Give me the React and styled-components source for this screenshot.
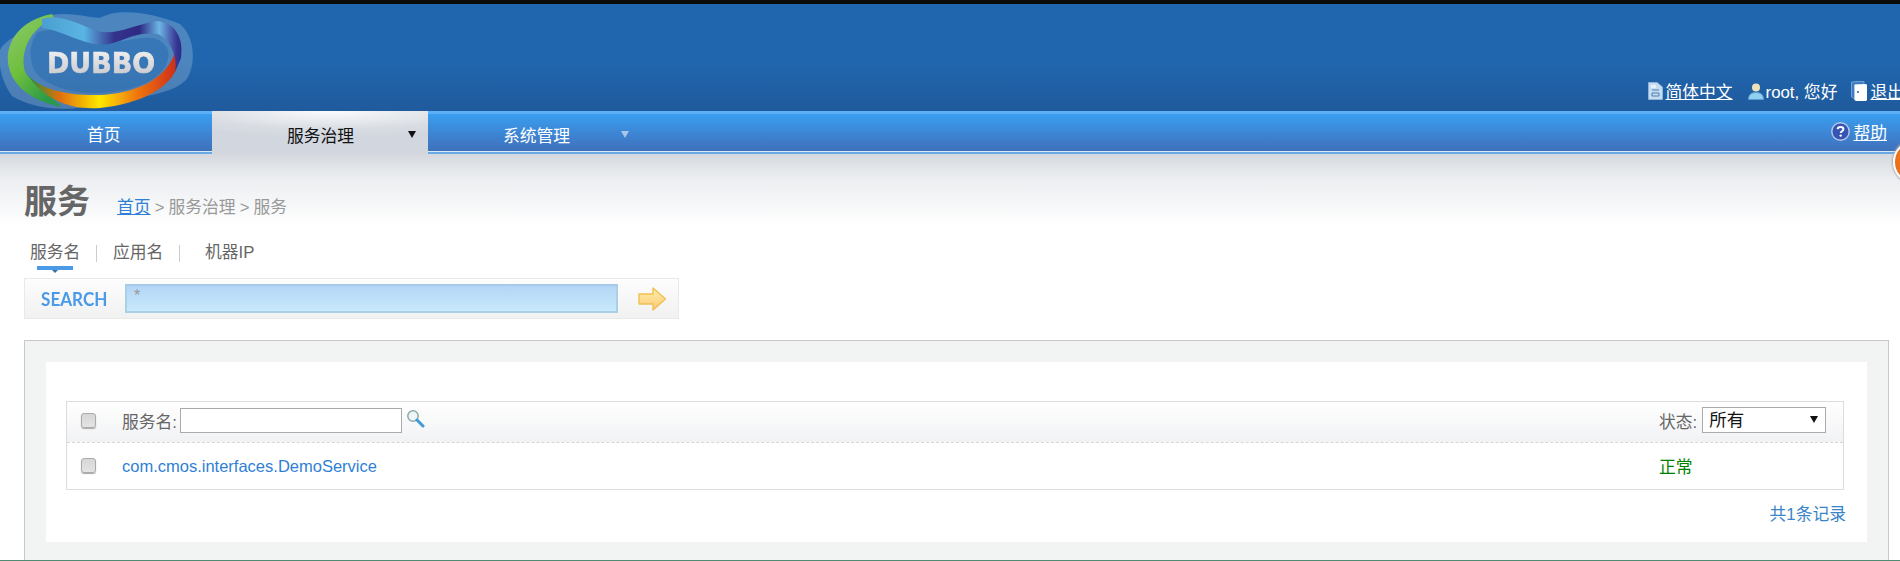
import React from "react";
import styled, { createGlobalStyle } from "styled-components";

const FONT = `"Liberation Sans", "Noto Sans CJK SC", sans-serif`;

const Global = createGlobalStyle`
  html, body { margin: 0; padding: 0; background: #fff; }
  body { font-family: ${FONT}; font-size: 16.8px; overflow: hidden; }
  * { box-sizing: border-box; }
`;

const Page = styled.div`
  position: relative;
  width: 1900px;
  height: 561px;
  overflow: hidden;
  display: flex;
  flex-direction: column;
`;
const TopEdge = styled.div`height: 4px; background: #0b0b0b;`;
const Header = styled.header`
  height: 107px;
  display: flex;
  justify-content: space-between;
  align-items: flex-end;
  background: linear-gradient(#2066ae 0%, #2066ae 55%, #1f5a9c 100%);
`;
const LogoBox = styled.svg`
  display: block;
  width: 196px;
  height: 107px;
  align-self: flex-start;
`;
const UserBar = styled.div`
  display: flex;
  align-items: center;
  height: 28px;
  margin-bottom: 6px;
  margin-right: -4px;
  color: #fff;
  white-space: nowrap;
`;
const UserItem = styled.span`
  display: flex;
  align-items: center;
  gap: 2px;
  margin-left: ${p => p.$gap}px;
  font-size: 16.8px;
`;
const HeadLink = styled.a`
  color: #fff;
  text-decoration: underline;
`;
const Nav = styled.nav`
  height: 43px;
  display: flex;
  background:
    linear-gradient(#5db0f8, #5db0f8) top / 100% 3px no-repeat,
    linear-gradient(#3a9ef0 3px, #3f70bb 40px);
  border-bottom: 2px solid #6aa9e6;
  box-shadow: inset 0 -1px 0 #dbe9f7;
`;
const Tab = styled.div`
  width: ${p => p.$w}px;
  height: ${p => (p.$active ? 43 : 41)}px;
  position: relative;
  color: ${p => (p.$active ? "#111" : "#fff")};
  background: ${p => (p.$active ? "radial-gradient(ellipse 90% 60% at 55% 0%, #fafbfc 0%, #d9dde3 70%, #d2d6de 100%)" : "transparent")};
  display: flex;
  align-items: center;
  padding-left: ${p => p.$pad}px;
  padding-top: ${p => p.$top}px;
  line-height: 1;
`;
const Caret = styled.i`
  position: absolute;
  left: ${p => p.$left}px;
  top: 20px;
  width: 0;
  height: 0;
  border: 4px solid transparent;
  border-bottom-width: 0;
  border-top: 7px solid ${p => p.$color};
`;
const NavSpacer = styled.div`flex: 1;`;
const HelpBox = styled.div`
  display: flex;
  align-items: center;
  gap: 3px;
  padding: 0 13px 0 0;
`;
const Content = styled.main`
  flex: 1;
  display: flex;
  flex-direction: column;
  background: linear-gradient(#d5d9df 0px, #eceef1 25px, #ffffff 72px);
`;
const TitleRow = styled.div`
  height: 66px;
  padding: 30px 0 0 24px;
  display: flex;
  align-items: flex-start;
`;
const Title = styled.h1`
  margin: 0;
  width: 93px;
  font-size: 33px;
  line-height: 36px;
  font-weight: 700;
  color: #666;
`;
const Crumbs = styled.div`
  margin-top: 12px;
  font-size: 16.8px;
  line-height: 24px;
  color: #999;
  word-spacing: -0.6px;
`;
const CrumbLink = styled.a`color: #2f7fd6; text-decoration: underline;`;
const SearchTabs = styled.div`
  display: flex;
  align-items: center;
  height: 58px;
  padding: 0 0 0 30px;
  color: #666;
  font-size: 16.8px;
  flex: none;
`;
const SearchTab = styled.span`
  position: relative;
  width: ${p => p.$w}px;
  line-height: 20px;
  margin-top: 8px;
`;
const TabMark = styled.i`
  position: absolute;
  left: 7px;
  top: 23px;
  width: 36px;
  height: 4px;
  background: #4a9ae8;
  &::after {
    content: "";
    position: absolute;
    left: 15px;
    top: 4px;
    border: 3px solid transparent;
    border-bottom-width: 0;
    border-top: 3px solid #3b6ea5;
  }
`;
const Sep = styled.i`
  width: 1px;
  height: 17px;
  margin-top: 8px;
  background: #ccc;
  margin-right: ${p => p.$mr}px;
`;
const SearchBar = styled.form`
  flex: none;
  margin: 0 0 21px 24px;
  width: 655px;
  height: 41px;
  display: flex;
  align-items: center;
  border: 1px solid #e9e9e9;
  background: linear-gradient(#fdfdfd, #f1f1f1);
  padding-left: 16px;
`;
const SearchLabel = styled.span`
  width: 84px;
  font-family: Lato, "Open Sans", sans-serif;
  font-weight: 700;
  font-size: 19px;
  color: #4a9ae8;
  transform: scaleX(0.9);
  transform-origin: left;
`;
const SearchInput = styled.input`
  width: 493px;
  height: 29px;
  margin-top: -1px;
  border: 2px solid #a9d0e6;
  border-top-color: #a5c9e8;
  padding: 0 0 4px 7px;
  outline: none;
  font-family: ${FONT};
  font-size: 16px;
  color: #999;
  background: linear-gradient(#b3d6f5, #c9e9fc);
`;
const GoArrow = styled.svg`
  width: 29px;
  height: 24px;
  margin-left: 20px;
`;
const Panel = styled.section`
  flex: 1;
  margin: 0 11px 0 24px;
  padding: 21px 21px 18px 21px;
  background: #f2f4f4;
  border: 1px solid #c8c8c8;
  border-bottom: 0;
`;
const Card = styled.div`
  height: 180px;
  background: #fff;
  padding: 39px 20px 0 20px;
  display: flex;
  flex-direction: column;
`;
const Table = styled.div`
  width: 1778px;
  height: 89px;
  border: 1px solid #dcdcdc;
  flex: none;
`;
const Row = styled.div`
  height: ${p => p.$h}px;
  display: grid;
  grid-template-columns: 41px 1537px 1fr;
  align-items: center;
  padding-left: 14px;
  padding-bottom: ${p => (p.$head ? 3 : 2)}px;
  background: ${p => (p.$head ? "linear-gradient(#ffffff, #f1f2f4)" : "#fff")};
  border-bottom: ${p => (p.$head ? "1px dashed #d6d6d6" : "0")};
  color: #666;
  font-size: 16.8px;
`;
const Check = styled.input.attrs({ type: "checkbox" })`
  appearance: none;
  display: block;
  margin: 0;
  width: 15px;
  height: 15px;
  border: 1px solid #aaa;
  border-radius: 3px;
  background: linear-gradient(#d6d6d6, #e4e4e4);
  box-shadow: 0 1px 1px #aaa;
`;
const NameCell = styled.div`
  display: flex;
  align-items: center;
  gap: 3px;
`;
const NameInput = styled.input`
  width: 222px;
  height: 25px;
  border: 1px solid #aaa;
  outline: none;
  background: #fff;
`;
const Magnifier = styled.svg`
  width: 19px;
  height: 19px;
  margin: -4px 0 0 1px;
`;
const StatusCell = styled.div`
  display: flex;
  align-items: center;
  gap: 5px;
  white-space: nowrap;
`;
const SelectWrap = styled.div`
  position: relative;
  width: 124px;
  height: 26px;
  margin-top: -1px;
`;
const Select = styled.select`
  appearance: none;
  width: 100%;
  height: 100%;
  border: 1px solid #aaa;
  border-radius: 0;
  background: #fff;
  color: #111;
  padding: 0 0 0 6px;
  font-family: ${FONT};
  font-size: 17.5px;
  outline: none;
`;
const SelectCaret = styled.i`
  position: absolute;
  right: 8px;
  top: 9px;
  border: 4px solid transparent;
  border-bottom-width: 0;
  border-top: 7px solid #111;
  pointer-events: none;
`;
const ServiceLink = styled.a`
  color: #2f7fd6;
  font-size: 16.5px;
  margin-top: 3px;
`;
const StatusOk = styled.span`
  color: #008000;
  margin-top: 2px;
`;
const Total = styled.div`
  align-self: flex-end;
  margin-top: 15px;
  margin-right: 1px;
  color: #3a85c8;
  font-size: 16.8px;
  line-height: 20px;
`;
const Foot = styled.div`
  position: absolute;
  left: 0;
  right: 0;
  bottom: 0;
  height: 1px;
  background: #4f8a72;
`;
const Bubble = styled.div`
  position: absolute;
  left: 1893px;
  top: 140px;
  width: 44px;
  height: 44px;
  border-radius: 50%;
  background: radial-gradient(circle at 40% 45%, #f47c20, #dd6414);
  border: 2px solid #fff;
  box-shadow: 0 0 2px 1px #aaa;
`;

const Logo = () => (
  <LogoBox viewBox="0 0 196 107">
    <defs>
      <linearGradient id="rb" x1="0" x2="1" y1="0" y2="0">
        <stop offset="0" stopColor="#1e8f3e" />
        <stop offset="0.22" stopColor="#e0700c" />
        <stop offset="0.48" stopColor="#ffe600" />
        <stop offset="0.72" stopColor="#ee7a10" />
        <stop offset="1" stopColor="#cf2a14" />
      </linearGradient>
      <linearGradient id="gr" x1="0" x2="0.6" y1="0" y2="1">
        <stop offset="0" stopColor="#8ccb72" />
        <stop offset="0.55" stopColor="#6fbe3c" />
        <stop offset="1" stopColor="#2a9a48" />
      </linearGradient>
      <linearGradient id="top" x1="0" x2="1" y1="0" y2="0">
        <stop offset="0" stopColor="#4b9fd0" />
        <stop offset="0.3" stopColor="#5ab4e4" />
        <stop offset="0.52" stopColor="#34328c" />
        <stop offset="0.7" stopColor="#2e2a84" />
        <stop offset="0.84" stopColor="#6cb6e6" />
        <stop offset="0.96" stopColor="#3a3a96" />
        <stop offset="1" stopColor="#2a2a86" />
      </linearGradient>
      <linearGradient id="tx" x1="0" x2="0" y1="0" y2="1">
        <stop offset="0" stopColor="#f4f4f4" />
        <stop offset="1" stopColor="#c4c4c8" />
      </linearGradient>
      <filter id="soft"><feGaussianBlur stdDeviation="0.5" /></filter>
    </defs>
    <g filter="url(#soft)">
      <path d="M0 46 C6 34 24 30 40 14 C62 6 80 12 100 14 C118 4 150 8 180 20 C196 34 196 62 186 76 C170 92 130 94 100 100 C70 108 34 106 12 92 C2 78 -2 62 0 46Z" fill="#fff" fillOpacity="0.2" />
      <path d="M38 28 C70 20 90 38 118 38 C140 34 160 28 168 46 C172 66 150 84 112 88 C78 92 46 84 34 66 C28 50 30 38 38 28Z" fill="#2066ae" fillOpacity="0.45" />
      <path d="M52 10 C20 16 6 38 8 58 C10 82 34 98 62 103 C48 90 36 82 26 70 C18 50 30 24 54 14Z" fill="url(#gr)" />
      <path d="M27 70 C40 86 70 92 100 91 C130 90 166 78 175 48 L178 60 C172 84 140 100 100 104 C70 106 44 96 27 70Z" fill="url(#rb)" />
      <path d="M42 15 C58 10 76 18 94 26 C114 33 130 22 156 17 C174 18 184 32 181 54 L175 68 C178 52 170 36 158 30 C130 26 118 44 94 40 C74 36 60 26 42 24Z" fill="url(#top)" />
      <text x="47" y="69" fontFamily="'DejaVu Sans', sans-serif" fontWeight="700" fontSize="28" stroke="url(#tx)" strokeWidth="0.6" textLength="108" lengthAdjust="spacingAndGlyphs" fill="url(#tx)">DUBBO</text>
    </g>
  </LogoBox>
);

const DocIcon = () => (
  <svg width="15" height="18" viewBox="0 0 15 18">
    <path d="M0.5 0.5H9L14.5 5V17.5H0.5Z" fill="#c6dcf0" stroke="#8fb3d6" />
    <path d="M4 8H11M4 11H11V14H4Z" stroke="#4b7fb5" fill="none" />
    <path d="M3 3H8V6H3Z" fill="#e8f1f8" />
  </svg>
);
const UserIcon = () => (
  <svg width="16" height="18" viewBox="0 0 16 18">
    <circle cx="8" cy="5.5" r="4" fill="#f0e2b8" />
    <path d="M0.5 17.5C0.5 12 4 10.5 8 10.5S15.5 12 15.5 17.5Z" fill="#8fd0f0" stroke="#5b9ad0" />
  </svg>
);
const ExitIcon = () => (
  <svg width="17" height="20" viewBox="0 0 17 20">
    <path d="M0.5 1L5 0.5H13V4H4V18L0.5 16Z" fill="#3f7cc0" stroke="#7fb0de" strokeWidth="0.8" />
    <path d="M3.5 3.5L15 3L16 4V19L15 20H5L3.5 19Z" fill="#fff" />
    <circle cx="7" cy="11" r="1" fill="#2066ae" />
  </svg>
);
const HelpIcon = () => (
  <svg width="19" height="19" viewBox="0 0 19 19">
    <circle cx="9.5" cy="9.5" r="8.7" fill="#3554b4" stroke="#b9c6e6" strokeWidth="1.4" />
    <path d="M6.6 7.2C6.8 5.5 8 5 9.5 5C11.2 5 12.4 6 12.4 7.3C12.4 9.2 9.8 9.3 9.7 11" stroke="#fff" strokeWidth="2" fill="none" />
    <circle cx="9.7" cy="13.6" r="1.2" fill="#fff" />
  </svg>
);
const Arrow = () => (
  <GoArrow viewBox="0 0 29 24">
    <defs>
      <linearGradient id="ar" x1="0" x2="0" y1="0" y2="1">
        <stop offset="0" stopColor="#fff0a8" />
        <stop offset="1" stopColor="#fbc878" />
      </linearGradient>
    </defs>
    <path d="M1 7H15V1L27.5 12L15 23V17H1Z" fill="url(#ar)" stroke="#f0c050" strokeWidth="1.4" strokeLinejoin="round" />
  </GoArrow>
);
const SearchGlyph = () => (
  <Magnifier viewBox="0 0 19 19">
    <circle cx="7" cy="7" r="5.2" fill="#eef6f8" stroke="#8fa8a8" strokeWidth="1.5" />
    <path d="M11 11L17 17" stroke="#3f9ad8" strokeWidth="3" strokeLinecap="round" />
  </Magnifier>
);

export default function App() {
  return (
    <Page>
      <Global />
      <TopEdge />
      <Header>
        <Logo />
        <UserBar>
          <UserItem $gap={0}><DocIcon /><HeadLink>简体中文</HeadLink></UserItem>
          <UserItem $gap={15}><UserIcon /><span>root, 您好</span></UserItem>
          <UserItem $gap={14}><ExitIcon /><HeadLink>退出</HeadLink></UserItem>
        </UserBar>
      </Header>
      <Nav>
        <Tab $w={212} $pad={87} $top={10}>首页</Tab>
        <Tab $w={216} $pad={75} $top={10} $active>服务治理<Caret $left={196} $color="#111" /></Tab>
        <Tab $w={215} $pad={75} $top={12}>系统管理<Caret $left={193} $color="#a9c6ea" /></Tab>
        <NavSpacer />
        <HelpBox><HelpIcon /><HeadLink>帮助</HeadLink></HelpBox>
      </Nav>
      <Content>
        <TitleRow>
          <Title>服务</Title>
          <Crumbs><CrumbLink>首页</CrumbLink> &gt; 服务治理 &gt; 服务</Crumbs>
        </TitleRow>
        <SearchTabs>
          <SearchTab $w={66}>服务名<TabMark /></SearchTab>
          <Sep $mr={16} />
          <SearchTab $w={66}>应用名</SearchTab>
          <Sep $mr={25} />
          <SearchTab $w={60}>机器IP</SearchTab>
        </SearchTabs>
        <SearchBar>
          <SearchLabel>SEARCH</SearchLabel>
          <SearchInput defaultValue="*" />
          <Arrow />
        </SearchBar>
        <Panel>
          <Card>
            <Table>
              <Row $h={41} $head>
                <Check />
                <NameCell>
                  服务名:
                  <NameInput />
                  <SearchGlyph />
                </NameCell>
                <StatusCell>
                  状态:
                  <SelectWrap>
                    <Select defaultValue="所有"><option>所有</option></Select>
                    <SelectCaret />
                  </SelectWrap>
                </StatusCell>
              </Row>
              <Row $h={46}>
                <Check />
                <ServiceLink>com.cmos.interfaces.DemoService</ServiceLink>
                <StatusOk>正常</StatusOk>
              </Row>
            </Table>
            <Total>共1条记录</Total>
          </Card>
        </Panel>
      </Content>
      <Foot />
      <Bubble />
    </Page>
  );
}
